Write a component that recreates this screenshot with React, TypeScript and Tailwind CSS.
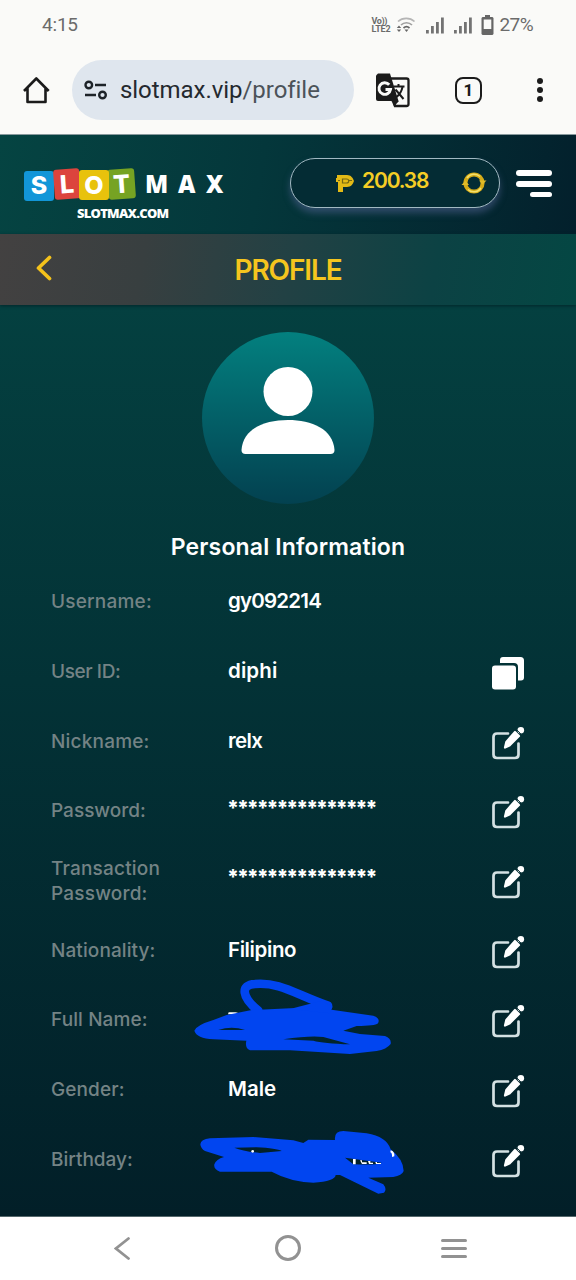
import type { ReactNode } from 'react';

type Field = {
  label: string;
  labelClass: string;
  value?: string;
  valueClass?: string;
  action?: 'copy' | 'edit';
  cover?: ReactNode;
};

function StatusBar() {
  return (
    <div className="flex h-[50px] items-center justify-between pl-[42px] pr-[43px] text-[#6b6b6b] font-[Roboto,sans-serif]">
      <span className="text-[19px] tracking-[-0.2px]">4:15</span>
      <div className="flex items-center">
        <div className="flex w-[20px] flex-col text-[9px] font-bold leading-[8px]">
          <span className="tracking-[-0.4px]">Vo))</span>
          <span className="tracking-[-0.2px]">LTE2</span>
        </div>
        <svg width="20" height="17" viewBox="0 0 20 17" fill="none" className="ml-[4px]">
          <path d="M2 4.500C6.500 .3 14 .3 18.500 4.500" stroke="#b5b5b5" strokeWidth="1.700" />
          <path d="M5 8C8 5 13 5 16 8" stroke="#a0a0a0" strokeWidth="1.700" />
          <path d="M7.500 11C9.500 9.200 11.500 9.200 13.500 11" stroke="#666" strokeWidth="1.700" />
          <path d="M8.500 12.500h4l-2 2.500zM.8 11L3 8.500 5.200 11zM.8 12.500h4.400L3 15z" fill="#666" />
        </svg>
        <Signal />
        <Signal />
        <svg width="13" height="20" viewBox="0 0 13 20" className="ml-[9px]">
          <path d="M4 0h5v2h2.500L12.500 3v16l-1 1H1.500l-1-1V3l1-1H4z" fill="#666" />
          <path d="M2.700 4.500h7.600v9.500H2.700z" fill="#fafaf8" />
        </svg>
        <span className="ml-[6px] text-[19px] tracking-[-0.6px]">27%</span>
      </div>
    </div>
  );
}

function Signal() {
  return (
    <svg width="18" height="17" viewBox="0 0 18 17" className="ml-[10px]" fill="#737373">
      <path d="M0 13h2.800v3.500H0zM5 9h2.800v7.500H5zM10 5h2.800v11.500H10zM15 .5h2.800v16H15z" />
    </svg>
  );
}

function BrowserBar() {
  return (
    <div className="flex h-[84px] items-start pl-[22px] pr-[33px] pt-[10px]">
      <svg width="28" height="60" viewBox="0 0 28 60" fill="none" stroke="#1b1b1b" strokeWidth="2.600">
        <path d="M2 31L14.300 18.500 26.700 31M5.500 28v14h18V28" strokeLinejoin="round" />
      </svg>
      <div className="ml-[22px] flex h-[60px] w-[282px] items-center rounded-full bg-[#dfe6ee] pl-[12px]">
        <svg width="24" height="20" viewBox="0 0 24 20" fill="none" stroke="#1d2328" strokeWidth="2.400">
          <circle cx="4.800" cy="5" r="3.300" />
          <path d="M11 5h11M1 15h11" />
          <circle cx="18.500" cy="15" r="3.300" />
        </svg>
        <span className="ml-[12px] font-[Roboto,sans-serif] text-[24px] tracking-[-0.050px] text-[#24292e]">
          slotmax.vip<span className="text-[#4c5359]">/profile</span>
        </span>
      </div>
      <svg width="34" height="60" viewBox="0 0 34 60" className="ml-[22px]">
        <path d="M13 18.500h17.500a2 2 0 0 1 2 2v23.500a2 2 0 0 1-2 2H19z" fill="none" stroke="#1b1b1b" strokeWidth="2.300" />
        <path d="M2 13.500h12L22.500 41H2a2 2 0 0 1-2-2V15.500z" fill="#1b1b1b" />
        <path d="M15.500 41h7.500l-5 5.500z" fill="#1b1b1b" />
        <path d="M13.200 24.800A5.800 5.800 0 1 0 14.500 29.500H9.500" fill="none" stroke="#fafaf8" strokeWidth="2.900" />
        <path d="M17.500 26.500h11M22.500 24v2.500" fill="none" stroke="#1b1b1b" strokeWidth="2" />
        <path d="M19.500 29.500l8 9.500M26.500 27c-1 5-3.500 8-6 10" fill="none" stroke="#1b1b1b" strokeWidth="2" />
      </svg>
      <div className="ml-[45px] mt-[17px] flex size-[27px] items-center justify-center rounded-[8px] border-[2.500px] border-[#1b1b1b] font-[Roboto,sans-serif] text-[17px] font-bold leading-none text-[#1b1b1b]">
        1
      </div>
      <div className="ml-auto mt-[18px] flex flex-col gap-[3px]">
        <i className="size-[6px] rounded-full bg-[#1b1b1b]" />
        <i className="size-[6px] rounded-full bg-[#1b1b1b]" />
        <i className="size-[6px] rounded-full bg-[#1b1b1b]" />
      </div>
    </div>
  );
}

function Logo() {
  return (
    <div className="w-[202px] pt-[34px] font-extrabold text-white">
      <div className="flex h-[32px] items-center text-[25px] leading-none">
        <span className="mt-px flex h-[30px] w-[30px] items-center justify-center rounded-[3px] bg-[#1296d8]">S</span>
        <span className="mt-[-2px] flex h-[30px] w-[26px] -rotate-4 items-center justify-center rounded-[3px] bg-[#dc443d]">L</span>
        <span className="z-10 -ml-px flex h-[30px] w-[30px] items-center justify-center rounded-[3px] bg-[#e8c20c]">O</span>
        <span className="-ml-px mt-[-3px] flex h-[30px] w-[27px] -rotate-4 items-center justify-center rounded-[3px] bg-[#76a323]">T</span>
        <span className="ml-[10px] mt-[-3px] w-[33px] font-['Open_Sans',sans-serif] text-[24px]">M</span>
        <span className="mt-[-3px] w-[28px] font-['Open_Sans',sans-serif] text-[24px]">A</span>
        <span className="mt-[-3px] font-['Open_Sans',sans-serif] text-[24px]">X</span>
      </div>
      <div className="ml-[53px] mt-[4px] font-['Open_Sans',sans-serif] text-[13px] leading-[16px] tracking-[-0.75px]">
        SLOTMAX.COM
      </div>
    </div>
  );
}

function SiteHeader() {
  return (
    <header className="flex h-[100px] border-t border-[#88999d] bg-linear-[100deg,#054442_0%,#04373b_45%,#03202c_100%] pl-[24px]">
      <Logo />
      <div className="ml-[64px] mt-[23px] flex h-[50px] w-[210px] items-center rounded-full border border-[#a2b9c2] bg-[#042c34] pl-[45px] pr-[12px] shadow-[0_5px_7px_rgba(82,99,145,0.55)]">
        <svg width="18" height="18" viewBox="0 0 18 18">
          <path d="M1 1h10c4 0 6 3 7 6-1 3-3 6-7 6H7v5H2V8H0V4h1z" fill="#e3ba16" />
          <path d="M6.500 5h4c3 0 3 4 0 4h-4zM2 6.500h2M12 6.500h4" fill="none" stroke="#766812" strokeWidth="1.200" />
        </svg>
        <span className="ml-[8px] mt-[-4px] font-[Inter,sans-serif] text-[21px] font-semibold tracking-[-1.150px] text-[#f5cd25]">
          200.38
        </span>
        <svg width="26" height="24" viewBox="0 0 26 24" className="ml-auto" fill="none">
          <circle cx="13" cy="12" r="8.600" stroke="#d6ac18" strokeWidth="4" />
          <path d="M6 7a8.500 8.500 0 0 1 13-1.500M20 17a8.500 8.500 0 0 1-13 1.500" stroke="#f5e06b" strokeWidth="1.500" />
          <path d="M18 9.500h7.500L21.500 13.500zM.5 14H8L4.500 9.500z" fill="#e0bb28" />
        </svg>
      </div>
      <div className="ml-[16px] mt-[35px] flex flex-col items-end gap-[5px]">
        <i className="h-[6px] w-[36px] rounded-full bg-white" />
        <i className="h-[6px] w-[36px] rounded-full bg-white" />
        <i className="h-[5px] w-[22px] rounded-full bg-white" />
      </div>
    </header>
  );
}

function TitleBar() {
  return (
    <div className="relative flex h-[71px] items-center justify-center bg-linear-[100deg,#434141_0%,#383f40_25%,#224144_50%,#0c4244_75%,#044743_100%] shadow-[0_1px_3px_#02272b]">
      <svg width="16" height="26" viewBox="0 0 16 26" className="absolute left-[36px] top-[21px]" fill="none">
        <path d="M13.500 2.500L2.500 13l11 10.500" stroke="#f4c21b" strokeWidth="3.700" strokeLinecap="round" strokeLinejoin="round" />
      </svg>
      <h1 className="text-[28px] font-semibold tracking-[-1.100px] text-[#f5c51e]">PROFILE</h1>
    </div>
  );
}

function EditIcon() {
  return (
    <svg width="34" height="36" viewBox="0 0 34 36" fill="none">
      <path d="M17 8.500H6Q2.500 8.500 2.500 12V29.500Q2.500 33 6 33H24Q27.500 33 27.500 29.500V18.500" stroke="#d4e1e3" strokeWidth="2.700" strokeLinecap="round" />
      <path d="M24 7L28 11 18.500 20.500 14 22.500 15.300 17z" fill="#fff" stroke="#fff" strokeWidth="2.200" strokeLinejoin="round" />
      <circle cx="29.800" cy="5.300" r="3.300" fill="#fff" />
      <path d="M25.500 4.500l5 5" stroke="#173d43" strokeWidth="1" />
    </svg>
  );
}

function CopyIcon() {
  return (
    <svg width="34" height="36" viewBox="0 0 34 36" fill="#fff">
      <path d="M9 5Q9 2 12 2H29.500Q33 2 33 5.500V22.500Q33 25.500 30 25.500H27V12Q27 8 23 8H9z" />
      <rect x="1" y="10.500" width="24" height="24" rx="3" />
    </svg>
  );
}

// Marker strokes drawn over the full name
function NameScribble() {
  return (
    <svg width="230" height="90" viewBox="0 0 690 270" className="absolute left-[180px] top-[-15px]">
      <path d="M146 127h20q10 0 8 6h-30z" fill="#fff" />
      <path d="M235 122C185 82 180 44 225 42C300 35 350 75 444 107" fill="none" stroke="#0145f0" strokeWidth="26" strokeLinecap="round" />
      <path
        fillRule="evenodd"
        fill="#0145f0"
        d="M140 135L215 120 330 115 455 119 580 137Q602 145 594 160Q585 168 530 168L490 182 540 192 615 198Q635 205 632 222Q620 238 590 243L510 252 330 241 210 241Q194 235 199 212L100 208Q50 205 43 182Q50 165 100 150ZM115 180Q155 167 195 180ZM310 208Q390 196 430 201L510 223Q430 220 400 212Z"
      />
      <path d="M330 117L425 92 458 110 450 130z" fill="#0145f0" />
    </svg>
  );
}

// Marker strokes drawn over the birthday
function BirthdayScribble() {
  return (
    <svg width="230" height="80" viewBox="0 450 690 240" className="absolute left-[180px] top-[-4px]">
      <path
        fillRule="evenodd"
        fill="#0145f0"
        d="M61 520Q62 505 90 502L220 498 340 508 370 516 385 506 465 507Q462 480 490 480L560 487Q620 497 632 535Q670 565 671 600Q666 614 640 618L565 620 610 640Q622 655 612 665L595 668 480 612 467 612Q466 631 400 635Q330 632 275 602L120 602Q100 595 103 580Q108 565 132 558L75 540Q62 533 61 520ZM163 530L230 529Q290 532 305 540L240 546Q190 541 163 530ZM495 560L605 575Q590 583 520 580Z"
      />
      <path d="M519 564h8v16h-8zM540 568h6v6h14v5h-14zM564 570h7v5h8v4h-12zM586 573h5v3h12v3h-15zM632 538q13 4 11 18l-7 2q1-12-5-14z" fill="#fff" />
      <circle cx="218" cy="541" r="4" fill="#fff" />
    </svg>
  );
}

const fields: Field[] = [
  { label: 'Username:', labelClass: 'tracking-[0.2px]', value: 'gy092214', valueClass: 'tracking-[-0.8px]' },
  { label: 'User ID:', labelClass: 'tracking-[-0.4px]', value: 'diphi', valueClass: 'tracking-[0.1px]', action: 'copy' },
  { label: 'Nickname:', labelClass: 'tracking-[0.2px]', value: 'relx', valueClass: 'tracking-[-0.6px]', action: 'edit' },
  { label: 'Password:', labelClass: 'tracking-[0px]', value: '***************', valueClass: 'relative -left-px -top-[3px] font-extrabold tracking-[-2.050px]', action: 'edit' },
  { label: 'Transaction Password:', labelClass: 'tracking-[0.2px]', value: '***************', valueClass: 'relative -left-px -top-[3px] font-extrabold tracking-[-2.050px]', action: 'edit' },
  { label: 'Nationality:', labelClass: 'tracking-[0.1px]', value: 'Filipino', valueClass: 'tracking-[-0.4px]', action: 'edit' },
  { label: 'Full Name:', labelClass: 'tracking-[0.1px]', action: 'edit', cover: <NameScribble /> },
  { label: 'Gender:', labelClass: 'tracking-[0.1px]', value: 'Male', valueClass: 'tracking-[0px]', action: 'edit' },
  { label: 'Birthday:', labelClass: 'tracking-[0px]', action: 'edit', cover: <BirthdayScribble /> },
];

function FieldRow({ label, labelClass, value, valueClass, action, cover }: Field) {
  return (
    <div className="relative flex h-[69.700px] items-center pl-[51px] pr-[51px]">
      <div className="w-[177px] pr-[50px] text-[19px] font-medium leading-[25px] text-[#748385]">
        <span className={labelClass}>{label}</span>
      </div>
      <div className="flex-1 text-[20.500px] font-semibold text-white">
        <span className={valueClass}>{value}</span>
      </div>
      <div className="mt-[3px]">
        {action === 'copy' && <CopyIcon />}
        {action === 'edit' && <EditIcon />}
      </div>
      {cover}
    </div>
  );
}

function SystemNav() {
  return (
    <nav className="flex h-[64px] items-center justify-between border-t border-[#55686c] bg-white pl-[114px] pr-[109px]">
      <svg width="16" height="24" viewBox="0 0 16 24" fill="none" stroke="#929292" strokeWidth="2.800" strokeLinecap="round">
        <path d="M14.500 1.500L2 11.500 14.500 21.500" />
      </svg>
      <i className="ml-[5px] mt-[-1px] size-[26px] rounded-full border-[3px] border-[#929292]" />
      <div className="flex flex-col gap-[5px]">
        <i className="h-[3px] w-[26px] rounded-full bg-[#929292]" />
        <i className="h-[3px] w-[26px] rounded-full bg-[#929292]" />
        <i className="h-[3px] w-[26px] rounded-full bg-[#929292]" />
      </div>
    </nav>
  );
}

export default function App() {
  return (
    <div className="flex h-[1280px] w-[576px] flex-col overflow-hidden bg-[#fafaf8] font-[Inter,sans-serif]">
      <StatusBar />
      <BrowserBar />
      <SiteHeader />
      <TitleBar />
      <main className="h-[911px] bg-linear-to-b from-[#044040] to-[#021f28]">
        <div className="flex flex-col items-center pt-[27px]">
          <div className="flex size-[172px] justify-center rounded-full bg-linear-to-b from-[#03807f] to-[#034150] pt-[35px]">
            <svg width="94" height="87" viewBox="0 0 94 87" fill="#fff">
              <circle cx="47" cy="24.500" r="24.500" />
              <path d="M.5 83C2 62 23 53 47 53s45 9 46.500 30q0 4-4 4h-85q-4 0-4-4z" />
            </svg>
          </div>
          <h2 className="mt-[26px] text-[23px] font-semibold leading-[34px] tracking-[0.150px] text-white">
            Personal Information
          </h2>
        </div>
        <div className="pt-[3px]">
          {fields.map((field) => (
            <FieldRow key={field.label} {...field} />
          ))}
        </div>
      </main>
      <SystemNav />
    </div>
  );
}
